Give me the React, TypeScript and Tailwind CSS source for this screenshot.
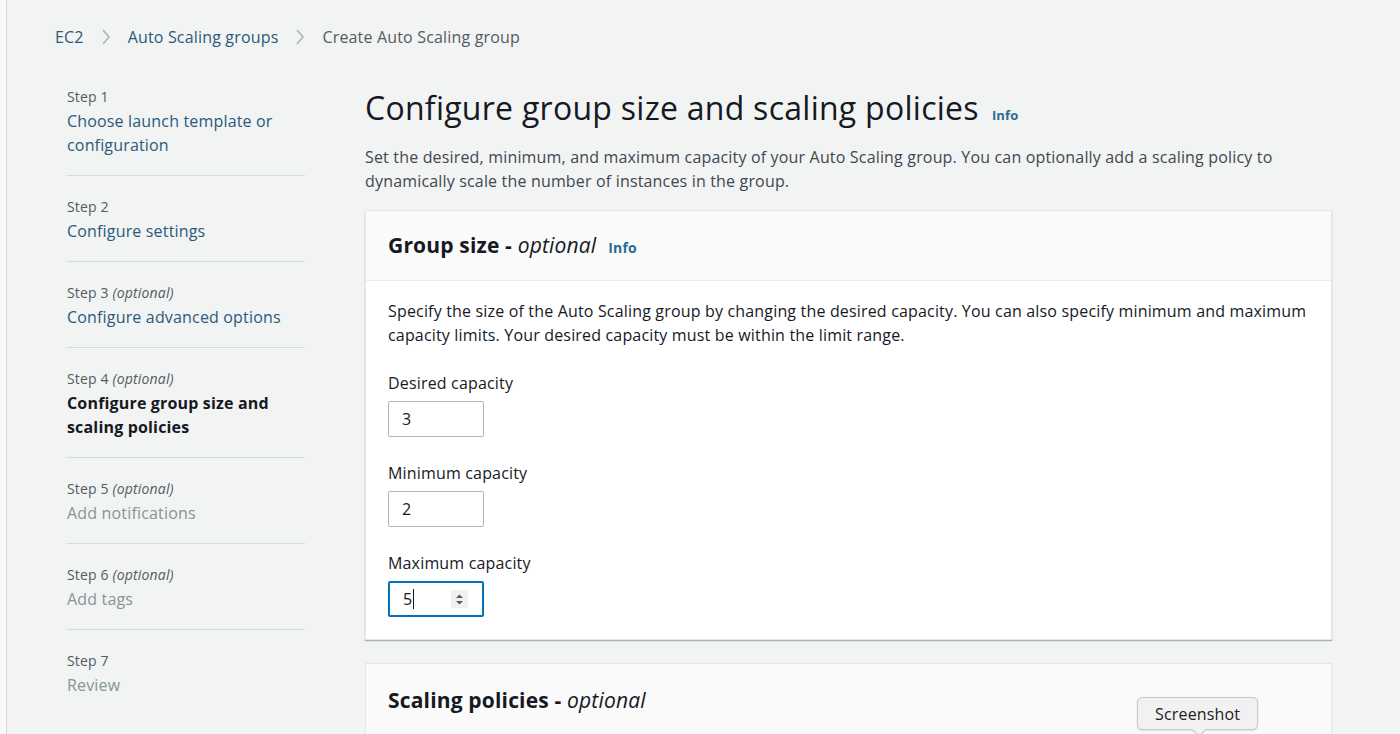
import React from 'react';

const FONT = { fontFamily: '"Open Sans", "Noto Sans", sans-serif' };

const STEPS = [
  { label: 'Step 1', optional: false, title: 'Choose launch template or configuration', state: 'done' },
  { label: 'Step 2', optional: false, title: 'Configure settings', state: 'done' },
  { label: 'Step 3', optional: true, title: 'Configure advanced options', state: 'done' },
  { label: 'Step 4', optional: true, title: 'Configure group size and scaling policies', state: 'current' },
  { label: 'Step 5', optional: true, title: 'Add notifications', state: 'todo' },
  { label: 'Step 6', optional: true, title: 'Add tags', state: 'todo' },
  { label: 'Step 7', optional: false, title: 'Review', state: 'todo' },
];

function Chevron() {
  return (
    <svg width="10" height="18" viewBox="0 0 10 18" className="mx-[17px]">
      <path d="M2 2 L8 9 L2 16" fill="none" stroke="#aab7b8" strokeWidth="1.6" />
    </svg>
  );
}

function CapacityField({ label, value, focused }: { label: string; value: string; focused?: boolean }) {
  return (
    <div>
      <div className="text-[16px] leading-[24px] text-[#16191f]">{label}</div>
      <div
        className={`mt-[6px] w-[96px] h-[36px] rounded-[2px] bg-white flex items-center pl-[13px] pr-[14px] ${
          focused ? 'border-2 border-[#0073bb] pl-[12px]' : 'border border-[#aab7b8]'
        }`}
      >
        <span className="text-[16px] text-[#16191f]">{value}</span>
        {focused && <span className="ml-[1px] w-px h-[20px] bg-[#16191f]" />}
        {focused && (
          <span className="ml-auto w-[17px] h-[18px] bg-[#f0f0f0] flex items-center justify-center">
            <svg width="9" height="13" viewBox="0 0 9 13">
              <path d="M1 5 L4.5 1.5 L8 5 Z" fill="#545b64" />
              <path d="M1 8 L4.5 11.5 L8 8 Z" fill="#545b64" />
            </svg>
          </span>
        )}
      </div>
    </div>
  );
}

export default function App() {
  return (
    <div className="h-[734px] w-[1400px] overflow-hidden bg-[#f2f3f3] flex tracking-[0.17px]" style={FONT}>
      <div className="w-[7px] bg-[#f8f8f8] border-r border-[#d5d5d5]" />

      <div className="flex-1 relative">
        {/* Breadcrumbs */}
        <div className="pl-[48px] pt-[25px] h-[78px] flex items-start text-[16px] leading-[24px]">
          <span className="text-[#2a5a7c]">EC2</span>
          <span className="mt-[3px]"><Chevron /></span>
          <span className="text-[#2a5a7c]">Auto Scaling groups</span>
          <span className="mt-[3px]"><Chevron /></span>
          <span className="text-[#545b64]">Create Auto Scaling group</span>
        </div>

        <div className="flex">
          {/* Wizard steps */}
          <nav className="ml-[60px] w-[238px] pt-[7px]">
            {STEPS.map((s, i) => (
              <div
                key={s.label}
                className={`${i === 0 ? 'pt-0' : 'pt-[19px]'} pb-[18px] ${
                  i < STEPS.length - 1 ? 'border-b border-[#d5dbdb]' : ''
                }`}
              >
                <div className="text-[14px] leading-[24px] text-[#545b64]">
                  {s.label}
                  {s.optional && <i> (optional)</i>}
                </div>
                <div
                  className={`text-[16px] leading-[24px] ${
                    s.state === 'current'
                      ? 'font-bold text-[#16191f]'
                      : s.state === 'done'
                      ? 'text-[#2a5a7c]'
                      : 'text-[#879596]'
                  }`}
                >
                  {s.title}
                </div>
              </div>
            ))}
          </nav>

          {/* Main */}
          <main className="ml-[60px] w-[967px] pt-[8px]">
            <div className="flex items-baseline">
              <h1 className="text-[32px] leading-[44px] tracking-[0.27px] text-[#16191f]">
                Configure group size and scaling policies
              </h1>
              <span className="ml-[13px] text-[13px] font-bold text-[#2a6c94]">Info</span>
            </div>
            <p className="mt-[15px] text-[16px] leading-[24px] text-[#414750] pr-[40px]">
              Set the desired, minimum, and maximum capacity of your Auto Scaling group. You can optionally add a scaling
              policy to dynamically scale the number of instances in the group.
            </p>

            {/* Group size card */}
            <section className="mt-[17px] bg-white border border-[#e3e6e6] shadow-[0_1px_1px_0_rgba(0,28,36,0.3)]">
              <div className="h-[70px] bg-[#fafafa] border-b border-[#eaeded] px-[22px] flex items-center">
                <h2 className="text-[21px] font-bold text-[#16191f]">
                  Group size - <i className="font-normal">optional</i>
                </h2>
                <span className="ml-[12px] mt-[4px] text-[14px] font-bold text-[#2a6c94]">Info</span>
              </div>
              <div className="px-[22px] pt-[18px] pb-[22px]">
                <p className="text-[16px] leading-[24px] text-[#16191f]">
                  Specify the size of the Auto Scaling group by changing the desired capacity. You can also specify minimum
                  and maximum capacity limits. Your desired capacity must be within the limit range.
                </p>
                <div className="mt-[24px] flex flex-col gap-[24px]">
                  <CapacityField label="Desired capacity" value="3" />
                  <CapacityField label="Minimum capacity" value="2" />
                  <CapacityField label="Maximum capacity" value="5" focused />
                </div>
              </div>
            </section>

            {/* Scaling policies card */}
            <section className="mt-[23px] bg-white border border-[#e3e6e6]">
              <div className="h-[80px] bg-[#fafafa] px-[22px] pt-[21px]">
                <h2 className="text-[21px] font-bold text-[#16191f]">
                  Scaling policies - <i className="font-normal">optional</i>
                </h2>
              </div>
            </section>
          </main>
        </div>

        {/* Screenshot tooltip */}
        <div className="absolute left-[1130px] top-[697px]">
          <div className="relative px-[17px] h-[33px] flex items-center rounded-[5px] bg-[#f1f1f1] border border-[#c8c8c8] shadow-[0_1px_2px_rgba(0,0,0,0.12)] text-[16px] text-[#222]">
            Screenshot
            <span className="absolute left-[56px] -bottom-[6px] w-[10px] h-[10px] rotate-45 bg-[#f1f1f1] border-r border-b border-[#c8c8c8]" />
          </div>
        </div>
      </div>
    </div>
  );
}
